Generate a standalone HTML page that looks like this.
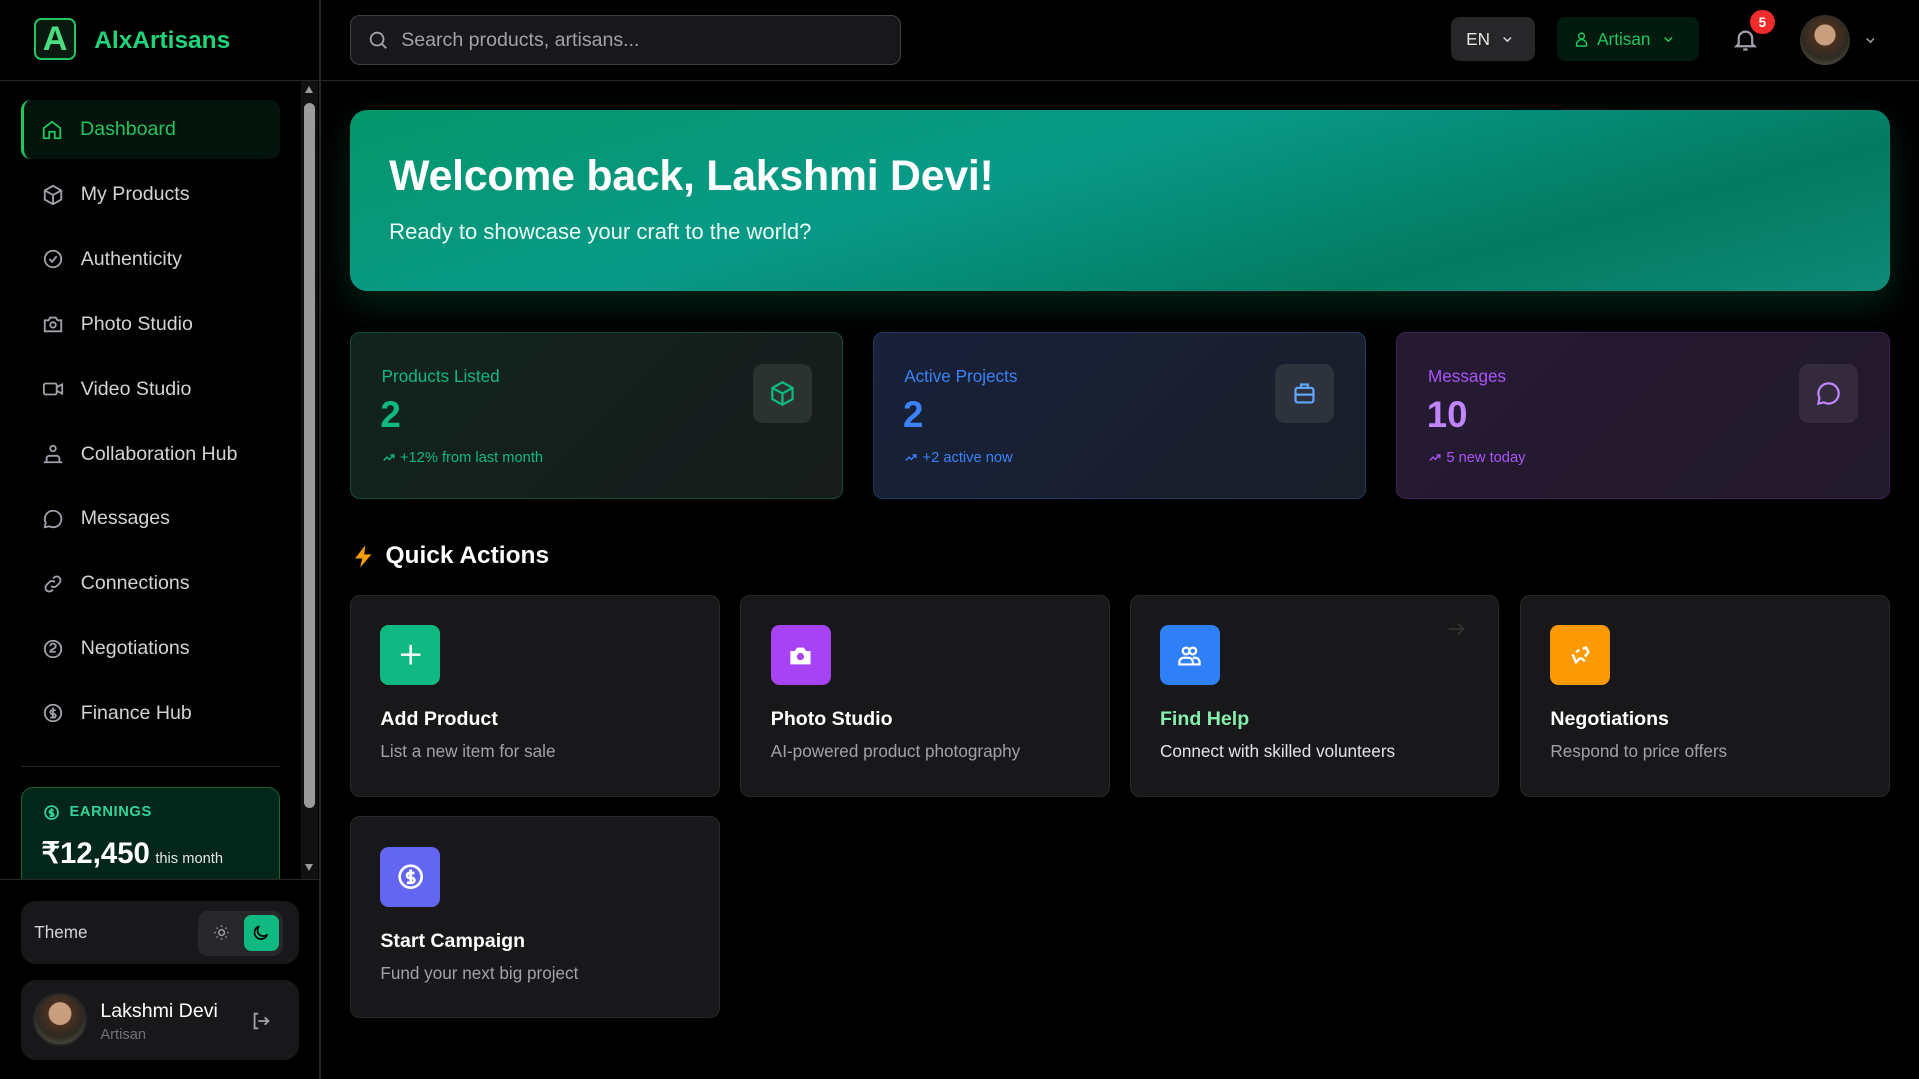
<!DOCTYPE html>
<html><head><meta charset="utf-8">
<style>
*{box-sizing:border-box;margin:0;padding:0}
html,body{width:1919px;height:1079px;overflow:hidden;background:#000;font-family:"Liberation Sans",sans-serif}
#w{position:absolute;left:0;top:0;width:1568px;height:882px;zoom:1.22385;background:#000;color:#fff}
.a{position:absolute}
svg{display:block}
.nav{position:absolute;left:17px;width:212px;height:48px;display:flex;align-items:center;color:#d4d4d8;font-size:16px}
.nav svg{margin-left:17px;margin-right:14px}
.stat{position:absolute;top:271px;width:403px;height:137px;border-radius:8px}
.stat .l{position:absolute;left:25px;top:27px;font-size:14px}
.stat .n{position:absolute;left:24px;top:50px;font-size:30px;font-weight:bold}
.stat .s{position:absolute;left:25px;top:96px;font-size:12px;display:flex;align-items:center;gap:4px}
.stat .ib{position:absolute;right:25px;top:26px;width:48px;height:48px;border-radius:8px;display:flex;align-items:center;justify-content:center}
.qa{position:absolute;width:302px;height:165px;background:#18181b;border:1px solid #27272a;border-radius:8px}
.qa .ic{position:absolute;left:24px;top:24px;width:49px;height:49px;border-radius:7px;display:flex;align-items:center;justify-content:center}
.qa .t{position:absolute;left:24px;top:92px;font-size:16px;font-weight:bold}
.qa .d{position:absolute;left:24px;top:119px;font-size:14px;color:#a1a1aa}
</style></head><body><div id="w">
<!-- sidebar -->
<div class="a" style="left:261px;top:0;width:1px;height:882px;background:#27272a"></div>
<div class="a" style="left:0;top:65px;width:1568px;height:1px;background:#27272a"></div>
<div class="a" style="left:28px;top:15px;width:34px;height:34px;border-radius:6px;background:#0a1a10;border:2px solid #22c55e;display:flex;align-items:center;justify-content:center;color:#4ade80;font-weight:bold;font-size:28px;line-height:1">A</div>
<div class="a" style="left:77px;top:22px;font-size:20px;font-weight:bold;color:#22d37a">AlxArtisans</div>

<div class="nav" style="top:82px;background:#03140d;border-radius:8px;color:#22c55e;border-left:3px solid #22c55e">
<svg width="18" height="18" viewBox="0 0 24 24" fill="none" stroke="#22c55e" stroke-width="2" style="margin-left:14px"><path d="M3 10l9-7 9 7v11h-6v-7H9v7H3z"/></svg>Dashboard</div>
<div class="nav" style="top:135px"><svg width="18" height="18" viewBox="0 0 24 24" fill="none" stroke="#a1a1aa" stroke-width="2"><path d="M12 2l9 5v10l-9 5-9-5V7z M3 7l9 5 9-5 M12 12v10"/></svg>My Products</div>
<div class="nav" style="top:188px"><svg width="18" height="18" viewBox="0 0 24 24" fill="none" stroke="#a1a1aa" stroke-width="2"><circle cx="12" cy="12" r="9"/><path d="M8 12l3 3 5-6"/></svg>Authenticity</div>
<div class="nav" style="top:241px"><svg width="18" height="18" viewBox="0 0 24 24" fill="none" stroke="#a1a1aa" stroke-width="2"><path d="M3 8h4l2-3h6l2 3h4v12H3z"/><circle cx="12" cy="13" r="3"/></svg>Photo Studio</div>
<div class="nav" style="top:294px"><svg width="18" height="18" viewBox="0 0 24 24" fill="none" stroke="#a1a1aa" stroke-width="2"><rect x="2" y="6" width="14" height="12" rx="2"/><path d="M16 10l6-3v10l-6-3"/></svg>Video Studio</div>
<div class="nav" style="top:347px"><svg width="18" height="18" viewBox="0 0 24 24" fill="none" stroke="#a1a1aa" stroke-width="2"><circle cx="12" cy="6" r="3"/><path d="M5 21v-4a3 3 0 013-3h8a3 3 0 013 3v4z M2 21h20"/></svg>Collaboration Hub</div>
<div class="nav" style="top:400px"><svg width="18" height="18" viewBox="0 0 24 24" fill="none" stroke="#a1a1aa" stroke-width="2"><path d="M12 3a9 9 0 00-8 13l-1 5 5-1A9 9 0 1012 3z"/><path d="M8 12h.01M12 12h.01M16 12h.01"/></svg>Messages</div>
<div class="nav" style="top:453px"><svg width="18" height="18" viewBox="0 0 24 24" fill="none" stroke="#a1a1aa" stroke-width="2"><path d="M10 14a4 4 0 006 0l3-3a4 4 0 00-6-6l-1 1 M14 10a4 4 0 00-6 0l-3 3a4 4 0 006 6l1-1"/></svg>Connections</div>
<div class="nav" style="top:506px"><svg width="18" height="18" viewBox="0 0 24 24" fill="none" stroke="#a1a1aa" stroke-width="2"><circle cx="12" cy="12" r="9"/><path d="M9 9a3 3 0 016 0c0 3-6 3-6 6h6"/></svg>Negotiations</div>
<div class="nav" style="top:559px"><svg width="18" height="18" viewBox="0 0 24 24" fill="none" stroke="#a1a1aa" stroke-width="2"><circle cx="12" cy="12" r="9"/><path d="M15 9h-4a2 2 0 000 4h2a2 2 0 010 4H9 M12 6v12"/></svg>Finance Hub</div>
<div class="a" style="left:17px;top:626px;width:212px;height:1px;background:#27272a"></div>
<div class="a" style="left:17px;top:643px;width:212px;height:75px;background:#022619;border:1px solid #166534;border-bottom:none;border-radius:10px 10px 0 0;overflow:hidden">
<div class="a" style="left:17px;top:13px;display:flex;align-items:center;gap:8px;color:#34d399;font-size:12px;font-weight:bold;letter-spacing:.5px"><svg width="14" height="14" viewBox="0 0 24 24" fill="none" stroke="#34d399" stroke-width="2.5"><circle cx="12" cy="12" r="9"/><path d="M15 9h-4a2 2 0 000 4h2a2 2 0 010 4H9 M12 6v12"/></svg>EARNINGS</div>
<div class="a" style="left:16px;top:39px;white-space:nowrap"><span style="font-size:24px;font-weight:bold">₹12,450</span> <span style="font-size:12px;color:#e5e5e5">this month</span></div>
</div>
<div class="a" style="left:246px;top:66px;width:14px;height:652px;background:#111"></div>
<div class="a" style="left:248px;top:84px;width:9px;height:576px;border-radius:5px;background:#9b9b9b"></div>
<div class="a" style="left:249px;top:70px;width:0;height:0;border-left:4px solid transparent;border-right:4px solid transparent;border-bottom:6px solid #9b9b9b"></div>
<div class="a" style="left:249px;top:706px;width:0;height:0;border-left:4px solid transparent;border-right:4px solid transparent;border-top:6px solid #9b9b9b"></div>
<div class="a" style="left:0;top:718px;width:261px;height:1px;background:#27272a"></div>
<div class="a" style="left:17px;top:736px;width:227px;height:52px;background:#18181b;border-radius:12px">
<div class="a" style="left:11px;top:17px;font-size:14px;color:#d4d4d8">Theme</div>
<div class="a" style="left:145px;top:8px;width:69px;height:37px;background:#27272a;border-radius:8px">
<svg class="a" style="left:12px;top:11px" width="14" height="14" viewBox="0 0 24 24" fill="none" stroke="#a1a1aa" stroke-width="2"><circle cx="12" cy="12" r="4"/><path d="M12 2v2M12 20v2M2 12h2M20 12h2M5 5l1.5 1.5M17.5 17.5L19 19M5 19l1.5-1.5M17.5 6.5L19 5"/></svg>
<div class="a" style="left:37px;top:4px;width:29px;height:29px;background:#10b981;border-radius:6px;display:flex;align-items:center;justify-content:center"><svg width="16" height="16" viewBox="0 0 24 24" fill="none" stroke="#000" stroke-width="2"><path d="M20 14A8 8 0 1110 4a6 6 0 0010 10z"/></svg></div>
</div></div>
<div class="a" style="left:17px;top:801px;width:227px;height:65px;background:#18181b;border-radius:12px">
<div class="a" style="left:10px;top:10px;width:44px;height:44px;border-radius:50%;border:2px solid #27272a;background:radial-gradient(circle at 50% 38%,#c8a080 0 28%,#4a3020 30%,#2d2a22 60%,#6b6b5a)"></div>
<div class="a" style="left:65px;top:16px;font-size:16px">Lakshmi Devi</div>
<div class="a" style="left:65px;top:38px;font-size:12px;color:#71717a">Artisan</div>
<svg class="a" style="left:187px;top:24px" width="18" height="18" viewBox="0 0 24 24" fill="none" stroke="#a1a1aa" stroke-width="2"><path d="M9 4H5v16h4 M16 8l4 4-4 4 M20 12H9"/></svg>
</div>

<!-- header -->
<div class="a" style="left:286px;top:12px;width:450px;height:41px;background:#18181b;border:1px solid #3f3f46;border-radius:8px">
<svg class="a" style="left:13px;top:11px" width="18" height="18" viewBox="0 0 24 24" fill="none" stroke="#a1a1aa" stroke-width="2"><circle cx="11" cy="11" r="7"/><path d="M16 16l5 5"/></svg>
<div class="a" style="left:41px;top:11px;font-size:16px;color:#a1a1aa">Search products, artisans...</div></div>
<div class="a" style="left:1186px;top:14px;width:68px;height:36px;background:#27272a;border-radius:7px;display:flex;align-items:center;padding-left:12px;gap:8px;font-size:14px;color:#e5e5e5">EN<svg width="12" height="12" viewBox="0 0 24 24" fill="none" stroke="#d4d4d8" stroke-width="2.5"><path d="M6 9l6 6 6-6"/></svg></div>
<div class="a" style="left:1272px;top:14px;width:116px;height:36px;background:#031a0f;border-radius:7px;display:flex;align-items:center;padding-left:13px;gap:6px;font-size:14px;color:#22c55e"><svg width="14" height="14" viewBox="0 0 24 24" fill="none" stroke="#22c55e" stroke-width="2"><circle cx="12" cy="7" r="4"/><path d="M5 21v-2a7 7 0 0114 0v2z"/></svg>Artisan<svg width="12" height="12" viewBox="0 0 24 24" fill="none" stroke="#22c55e" stroke-width="2.5" style="margin-left:3px"><path d="M6 9l6 6 6-6"/></svg></div>
<svg class="a" style="left:1415px;top:21px" width="22" height="22" viewBox="0 0 24 24" fill="none" stroke="#a1a1aa" stroke-width="2"><path d="M6 16V11a6 6 0 0112 0v5l2 2H4z M10 21h4"/></svg>
<div class="a" style="left:1430px;top:8px;width:20px;height:20px;border-radius:50%;background:#ef2b2b;font-size:11px;font-weight:bold;display:flex;align-items:center;justify-content:center">5</div>
<div class="a" style="left:1471px;top:12px;width:41px;height:41px;border-radius:50%;background:radial-gradient(circle at 50% 40%,#c8a080 0 26%,#4a3020 28%,#2d2a22 60%,#6b6b5a)"></div>
<svg class="a" style="left:1522px;top:27px" width="12" height="12" viewBox="0 0 24 24" fill="none" stroke="#a1a1aa" stroke-width="2.5"><path d="M6 9l6 6 6-6"/></svg>

<!-- hero -->
<div class="a" style="left:286px;top:90px;width:1258px;height:148px;border-radius:14px;background:linear-gradient(165deg,#059669 0%,#089a88 40%,#037a60 75%,#0e8a78 100%);box-shadow:0 10px 30px rgba(5,150,105,.25)">
<div class="a" style="left:32px;top:34px;font-size:35px;font-weight:bold;letter-spacing:-0.2px">Welcome back, Lakshmi Devi!</div>
<div class="a" style="left:32px;top:89px;font-size:18px;color:#ecfdf5">Ready to showcase your craft to the world?</div></div>

<!-- stats -->
<div class="stat" style="left:286px;background:linear-gradient(135deg,#11231d,#171c1b);border:1px solid #134e33">
<div class="l" style="color:#10b981">Products Listed</div><div class="n" style="color:#10b981">2</div>
<div class="s" style="color:#10b981"><svg width="11" height="11" viewBox="0 0 24 24" fill="none" stroke="#10b981" stroke-width="2.5"><path d="M3 17l6-6 4 4 8-8 M15 7h6v6"/></svg>+12% from last month</div>
<div class="ib" style="background:#2c3230"><svg width="22" height="22" viewBox="0 0 24 24" fill="none" stroke="#10b981" stroke-width="2"><path d="M12 2l9 5v10l-9 5-9-5V7z M3 7l9 5 9-5 M12 12v10"/></svg></div></div>
<div class="stat" style="left:713px;background:linear-gradient(135deg,#18213a,#1a1e28);border:1px solid #1e3a5f">
<div class="l" style="color:#3b82f6">Active Projects</div><div class="n" style="color:#3b82f6">2</div>
<div class="s" style="color:#3b82f6"><svg width="11" height="11" viewBox="0 0 24 24" fill="none" stroke="#3b82f6" stroke-width="2.5"><path d="M3 17l6-6 4 4 8-8 M15 7h6v6"/></svg>+2 active now</div>
<div class="ib" style="background:#2d323d"><svg width="22" height="22" viewBox="0 0 24 24" fill="none" stroke="#60a5fa" stroke-width="2"><rect x="4" y="7" width="16" height="13" rx="2"/><path d="M9 7V4h6v3 M4 13h16 M12 12v2"/></svg></div></div>
<div class="stat" style="left:1141px;background:linear-gradient(135deg,#261a33,#211a2a);border:1px solid #3b2156">
<div class="l" style="color:#a855f7">Messages</div><div class="n" style="color:#c084fc">10</div>
<div class="s" style="color:#a855f7"><svg width="11" height="11" viewBox="0 0 24 24" fill="none" stroke="#a855f7" stroke-width="2.5"><path d="M3 17l6-6 4 4 8-8 M15 7h6v6"/></svg>5 new today</div>
<div class="ib" style="background:#332a3c"><svg width="22" height="22" viewBox="0 0 24 24" fill="none" stroke="#c084fc" stroke-width="2"><path d="M12 3a9 9 0 00-8 13l-1 5 5-1A9 9 0 1012 3z"/><path d="M8 12h.01M12 12h.01M16 12h.01"/></svg></div></div>

<!-- quick actions -->
<svg class="a" style="left:287px;top:444px" width="20" height="22" viewBox="0 0 24 24"><path d="M14 1L4 14h7l-2 9 11-13h-7z" fill="#f59e0b"/></svg>
<div class="a" style="left:315px;top:443px;font-size:20px;font-weight:bold">Quick Actions</div>

<div class="qa" style="left:286px;top:486px"><div class="ic" style="background:#10b981"><svg width="24" height="24" viewBox="0 0 24 24" fill="none" stroke="#fff" stroke-width="2"><path d="M12 4v16M4 12h16"/></svg></div><div class="t">Add Product</div><div class="d">List a new item for sale</div></div>
<div class="qa" style="left:605px;top:486px"><div class="ic" style="background:#a742f5"><svg width="22" height="22" viewBox="0 0 24 24" fill="#fff"><path d="M3 8h4l2-3h6l2 3h4v12H3z"/><circle cx="12" cy="13" r="3.2" fill="#a742f5"/></svg></div><div class="t">Photo Studio</div><div class="d">AI-powered product photography</div></div>
<div class="qa" style="left:923px;top:486px"><div class="ic" style="background:#2f7ff7"><svg width="22" height="22" viewBox="0 0 24 24" fill="none" stroke="#fff" stroke-width="2"><circle cx="9" cy="8" r="3"/><circle cx="15" cy="8" r="3"/><path d="M3 20v-2a4 4 0 014-4h4a4 4 0 014 4v2z M15 14h2a4 4 0 014 4v2h-6"/></svg></div><div class="t" style="color:#86efac">Find Help</div><div class="d" style="color:#e4e4e7">Connect with skilled volunteers</div>
<svg class="a" style="left:257px;top:18px" width="18" height="18" viewBox="0 0 24 24" fill="none" stroke="#333" stroke-width="2"><path d="M4 12h16M14 6l6 6-6 6"/></svg></div>
<div class="qa" style="left:1242px;top:486px"><div class="ic" style="background:#fb9a05"><svg width="22" height="22" viewBox="0 0 24 24" fill="none" stroke="#fff" stroke-width="2.2"><path d="M5 11l3 7 4-4 M12 14l4 3 M14 6l3-1 2 4-3 4 M8 9l3-2"/></svg></div><div class="t">Negotiations</div><div class="d">Respond to price offers</div></div>
<div class="qa" style="left:286px;top:667px"><div class="ic" style="background:#6366f1"><svg width="24" height="24" viewBox="0 0 24 24" fill="none" stroke="#fff" stroke-width="2.2"><circle cx="12" cy="12" r="9"/><path d="M15 9h-4a2 2 0 000 4h2a2 2 0 010 4H9 M12 6v12"/></svg></div><div class="t">Start Campaign</div><div class="d">Fund your next big project</div></div>
</div></body></html>
